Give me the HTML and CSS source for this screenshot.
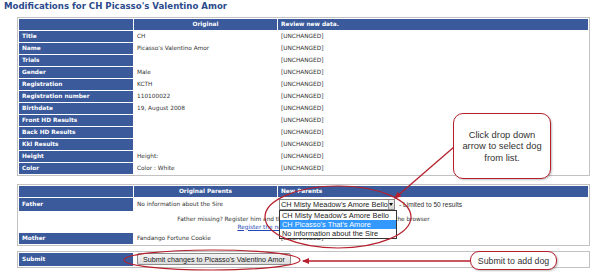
FILE: index.html
```html
<!DOCTYPE html>
<html lang="en">
<head>
    <meta charset="UTF-8">
    <title>Modifications for CH Picasso's Valentino Amor</title>
    <link rel="stylesheet" href="styles.css">
</head>
<body>
    <h1 class="page-title">Modifications for CH Picasso's Valentino Amor</h1>

    <table class="edit-table">
        <colgroup><col class="col-label"><col class="col-orig"><col></colgroup>
        <tr><th></th><th class="center">Original</th><th>Review new data.</th></tr>
        <tr><td class="label">Title</td><td>CH</td><td>[UNCHANGED]</td></tr>
        <tr><td class="label">Name</td><td>Picasso's Valentino Amor</td><td>[UNCHANGED]</td></tr>
        <tr><td class="label">Trials</td><td></td><td>[UNCHANGED]</td></tr>
        <tr><td class="label">Gender</td><td>Male</td><td>[UNCHANGED]</td></tr>
        <tr><td class="label">Registration</td><td>KCTH</td><td>[UNCHANGED]</td></tr>
        <tr><td class="label">Registration number</td><td>110100022</td><td>[UNCHANGED]</td></tr>
        <tr><td class="label">Birthdate</td><td>19, August 2008</td><td>[UNCHANGED]</td></tr>
        <tr><td class="label">Front HD Results</td><td></td><td>[UNCHANGED]</td></tr>
        <tr><td class="label">Back HD Results</td><td></td><td>[UNCHANGED]</td></tr>
        <tr><td class="label">Kkl Results</td><td></td><td>[UNCHANGED]</td></tr>
        <tr><td class="label">Height</td><td>Height:</td><td>[UNCHANGED]</td></tr>
        <tr><td class="label">Color</td><td>Color : White</td><td>[UNCHANGED]</td></tr>
    </table>

    <table class="edit-table parents">
        <colgroup><col class="col-label"><col class="col-orig"><col></colgroup>
        <tr><th></th><th class="center">Original Parents</th><th>New Parents</th></tr>
        <tr class="father-row">
            <td class="label">Father</td>
            <td>No information about the Sire</td>
            <td>
                <div class="pick">
                    <div class="select">
                        <span class="select-text">CH Misty Meadow's Amore Bello</span>
                        <span class="select-arrow"></span>
                        <ul class="select-list">
                            <li>CH Misty Meadow's Amore Bello</li>
                            <li class="active">CH Picasso's That's Amore</li>
                            <li>No information about the Sire</li>
                        </ul>
                    </div>
                    <span class="limit">- Limited to 50 results</span>
                </div>
            </td>
        </tr>
        <tr>
            <td colspan="3" class="missing">
                Father missing? Register him and then press the refresh button located on the browser<br>
                <a href="#">Register the new father in a separate window</a>
            </td>
        </tr>
        <tr><td class="label">Mother</td><td>Fandango Fortune Cookie</td><td>[UNCHANGED]</td></tr>
    </table>

    <table class="edit-table submit-table">
        <colgroup><col class="col-label"><col></colgroup>
        <tr>
            <td class="label">Submit</td>
            <td><button class="submit-btn">Submit changes to Picasso's Valentino Amor</button></td>
        </tr>
    </table>

    <!-- annotations drawn over the page -->
    <svg class="notes" width="600" height="272" viewBox="0 0 600 272">
        <defs>
            <marker id="head" markerWidth="8" markerHeight="8" refX="6" refY="3" orient="auto" markerUnits="userSpaceOnUse">
                <path d="M0,0 L7,3 L0,6 Z" fill="#b5202c"/>
            </marker>
        </defs>
        <ellipse cx="338" cy="217" rx="73" ry="31" class="ring"/>
        <ellipse cx="212" cy="260" rx="88" ry="10" class="ring"/>
        <line x1="454" y1="147" x2="395" y2="198" class="pointer" marker-end="url(#head)"/>
        <line x1="470" y1="261" x2="303" y2="261" class="pointer" marker-end="url(#head)"/>
    </svg>
    <div class="callout drop-note">Click drop down<br>arrow to select dog<br>from list.</div>
    <div class="callout submit-note">Submit to add dog</div>
</body>
</html>
```

FILE: styles.css
```css
/* base */
* {
    margin: 0;
    padding: 0;
    box-sizing: border-box;
}

body {
    position: relative;
    width: 600px;
    height: 272px;
    overflow: hidden;
    background: #fff;
    font-family: "DejaVu Sans", Verdana, sans-serif;
    font-size: 5.8px;
    color: #333;
    padding: 0 0 0 4px;
}

.page-title {
    font-size: 8.6px;
    font-weight: bold;
    color: #2b4b8c;
    line-height: 12px;
    margin-bottom: 5px;
}

/* tables */
.edit-table {
    width: 573px;
    margin-left: 13px;
    border: 1px solid #c2c2c2;
    border-spacing: 1px;
    table-layout: fixed;
    background: #fff;
}

.col-label {
    width: 114px;
}

.col-orig {
    width: 143px;
}

.edit-table th,
.edit-table td {
    height: 11px;
    line-height: 11px;
    padding: 0 3px;
    white-space: nowrap;
    text-align: left;
    vertical-align: middle;
}

.edit-table th {
    background: #3a5a9b;
    color: #fff;
    font-weight: bold;
}

.edit-table th.center {
    text-align: center;
}

.edit-table td.label {
    background: #3a5a9b;
    color: #fff;
    font-weight: bold;
}

.parents {
    margin-top: 8px;
}

.father-row td {
    height: 13px;
}

.missing {
    text-align: center !important;
    line-height: 8px !important;
    height: 20px !important;
    padding-top: 1px !important;
}

.missing a {
    color: #2448b8;
}

/* fake select box with its list opened */
.pick {
    display: flex;
    align-items: center;
    gap: 4px;
    margin-left: -2px;
}

.select {
    position: relative;
    display: flex;
    width: 116px;
    height: 11px;
    border: 1px solid #8a8a8a;
    background: #fff;
    font-family: "Liberation Sans", Arial, sans-serif;
    font-size: 7.4px;
    color: #222;
}

.select-text {
    flex: 1;
    line-height: 9px;
    padding-left: 1px;
}

.select-arrow {
    width: 9px;
    background: linear-gradient(#f2f2f2, #d4d4d4);
    border-left: 1px solid #9a9a9a;
    display: flex;
    align-items: center;
    justify-content: center;
}

.select-arrow::after {
    content: "";
    border-left: 2px solid transparent;
    border-right: 2px solid transparent;
    border-top: 3px solid #111;
}

.select-list {
    position: absolute;
    top: 10px;
    left: -1px;
    width: 118px;
    list-style: none;
    background: #fff;
    border: 1px solid #333;
    z-index: 5;
}

.select-list li {
    height: 9px;
    line-height: 9px;
    padding-left: 2px;
}

.select-list li.active {
    background: #3399ff;
    color: #fff;
}

.limit {
    font-family: "Liberation Sans", Arial, sans-serif;
    font-size: 6.6px;
}

.submit-table {
    margin-top: 5px;
}

.submit-table td {
    height: 13px;
}

.submit-btn {
    height: 12px;
    padding: 0 5px;
    font-family: "Liberation Sans", Arial, sans-serif;
    font-size: 7.2px;
    color: #222;
    background: linear-gradient(#f4f4f4, #dcdcdc);
    border: 1px solid #8c8c8c;
    border-radius: 2px;
}

/* annotations */
.notes {
    position: absolute;
    top: 0;
    left: 0;
    pointer-events: none;
    z-index: 10;
}

.ring {
    fill: none;
    stroke: #b5202c;
    stroke-width: 1.2;
}

.pointer {
    stroke: #b5202c;
    stroke-width: 1.3;
}

.callout {
    position: absolute;
    z-index: 11;
    display: flex;
    align-items: center;
    justify-content: center;
    text-align: center;
    background: #fff;
    border: 1px solid #b5202c;
    box-shadow: 1px 1px 2px rgba(0, 0, 0, 0.25);
    font-family: "Liberation Sans", Arial, sans-serif;
    color: #333;
}

.drop-note {
    left: 453px;
    top: 113px;
    width: 98px;
    height: 66px;
    border-radius: 10px;
    font-size: 9.4px;
    line-height: 11.5px;
    white-space: nowrap;
}

.submit-note {
    left: 470px;
    top: 251px;
    width: 87px;
    height: 19px;
    border-radius: 9px;
    font-size: 8.8px;
}
```
